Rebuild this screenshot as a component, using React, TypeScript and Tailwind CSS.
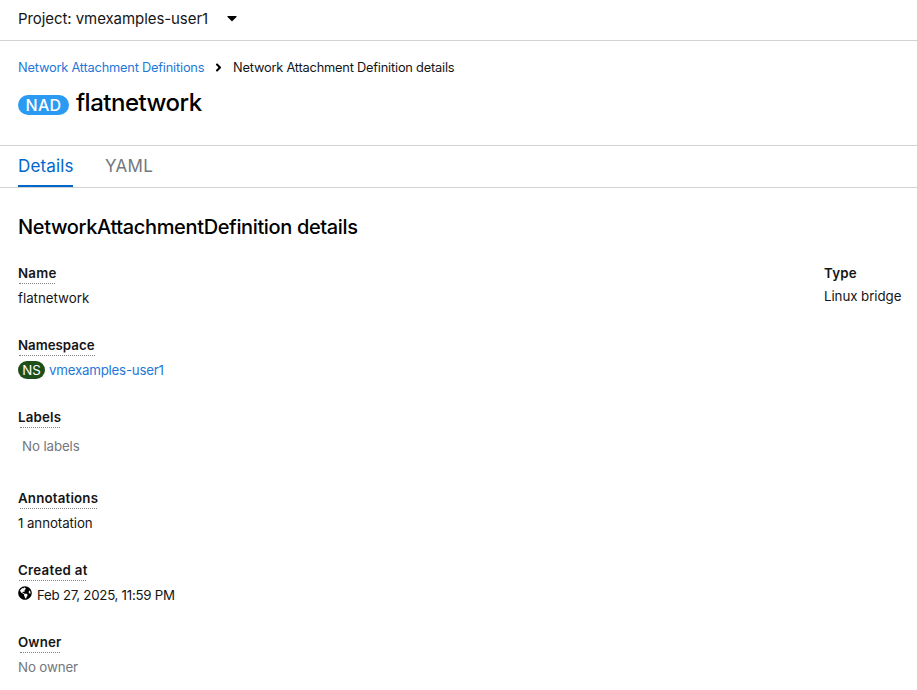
import type { ReactNode } from "react";
import { FaAngleRight, FaCaretDown, FaGlobeAmericas } from "react-icons/fa";

type FieldProps = {
  label: string;
  labelClass: string;
  lineClass: string;
  className?: string;
  children: ReactNode;
};

function Field({ label, labelClass, lineClass, className = "h-[72px]", children }: FieldProps) {
  return (
    <div className={className}>
      <dt className="h-[21px]">
        <div className={`h-[18px] whitespace-nowrap text-[13.3px] font-semibold leading-[18px] ${labelClass}`}>{label}</div>
        <div className={`mt-px h-px border-t border-dotted border-[#7d8085] ${lineClass}`} />
      </dt>
      <dd className="mt-[3px] flex h-5 items-center whitespace-nowrap text-[13.3px] leading-5">{children}</dd>
    </div>
  );
}

export default function App() {
  return (
    <div className="h-[690px] w-[917px] overflow-hidden bg-white font-['Inter','Liberation_Sans',sans-serif] text-[#151515]">
      <header className="flex h-[41px] items-start border-b border-[#d2d2d2] pl-[18px] pt-[7px]">
        <button className="flex h-6 items-center whitespace-nowrap text-[15px] leading-6 tracking-[-0.07px]">
          <span className="w-[206px] text-left">Project: vmexamples-user1</span>
          <FaCaretDown className="mb-[2px] size-4 text-black" />
        </button>
      </header>

      <section className="h-[104px] px-[18px] pt-[17px]">
        <nav className="flex h-5 items-center whitespace-nowrap text-[12.8px] leading-5 tracking-[-0.2px]">
          <a className="w-[194px] shrink-0 text-[#1f78d8]">Network Attachment Definitions</a>
          <FaAngleRight className="mb-[2px] mr-[8px] size-[13px] text-black" />
          <span>Network Attachment Definition details</span>
        </nav>
        <h1 className="mt-[9px] flex h-8 items-center text-2xl leading-8 text-black">
          <span className="mr-[7px] mt-1 flex h-5 w-[51px] items-center justify-center rounded-full bg-[#2b9af3] text-base font-medium leading-5 tracking-[0.3px] text-white">NAD</span>
          <span className="font-medium tracking-[-0.5px]">flatnetwork</span>
        </h1>
      </section>

      <nav className="flex h-[43px] items-stretch border-y border-[#d2d2d2] pl-[18px] text-[17px] leading-6 tracking-[0.15px]">
        <a className="mr-8 w-[55px] border-b-2 border-[#0066cc] pt-2 text-[#0066cc]">Details</a>
        <a className="pt-2 tracking-[0.3px] text-[#74777c]">YAML</a>
      </nav>

      <main className="px-[18px] pt-6">
        <h2 className="h-[30px] whitespace-nowrap text-[20px] font-medium leading-[30px] tracking-[-0.36px] text-black">NetworkAttachmentDefinition details</h2>
        <div className="mt-[22px] flex">
          <dl className="w-[806px] shrink-0">
            <Field label="Name" labelClass="tracking-[0.25px]" lineClass="ml-px w-[36px]">flatnetwork</Field>
            <Field label="Namespace" labelClass="" lineClass="ml-px w-[76px]">
              <span className="mr-1 flex h-[18px] w-[27px] items-center justify-center rounded-full bg-[#1e4f18] text-white">NS</span>
              <a className="tracking-[-0.22px] text-[#1f78d8]">vmexamples-user1</a>
            </Field>
            <Field label="Labels" labelClass="tracking-[0.2px]" lineClass="ml-[2px] w-[40px]" className="h-[81px]">
              <span className="ml-1 mt-2 tracking-[-0.1px] text-[#74777c]">No labels</span>
            </Field>
            <Field label="Annotations" labelClass="tracking-[0.18px]" lineClass="ml-[2px] w-[77px]">
              <span className="tracking-[-0.08px]">1 annotation</span>
            </Field>
            <Field label="Created at" labelClass="tracking-[0.28px]" lineClass="ml-px w-[67px]">
              <FaGlobeAmericas className="mb-[5px] mr-[5px] size-[14px] text-black" />
              <span className="tracking-[-0.27px]">Feb 27, 2025, 11:59 PM</span>
            </Field>
            <Field label="Owner" labelClass="tracking-[0.15px]" lineClass="ml-[2px] w-[40px]">
              <span className="tracking-[-0.12px] text-[#74777c]">No owner</span>
            </Field>
          </dl>
          <dl className="whitespace-nowrap text-[13.3px]">
            <dt className="h-[18px] font-semibold leading-[18px] tracking-[0.25px]">Type</dt>
            <dd className="mt-1 leading-5 tracking-[-0.06px]">Linux bridge</dd>
          </dl>
        </div>
      </main>
    </div>
  );
}
